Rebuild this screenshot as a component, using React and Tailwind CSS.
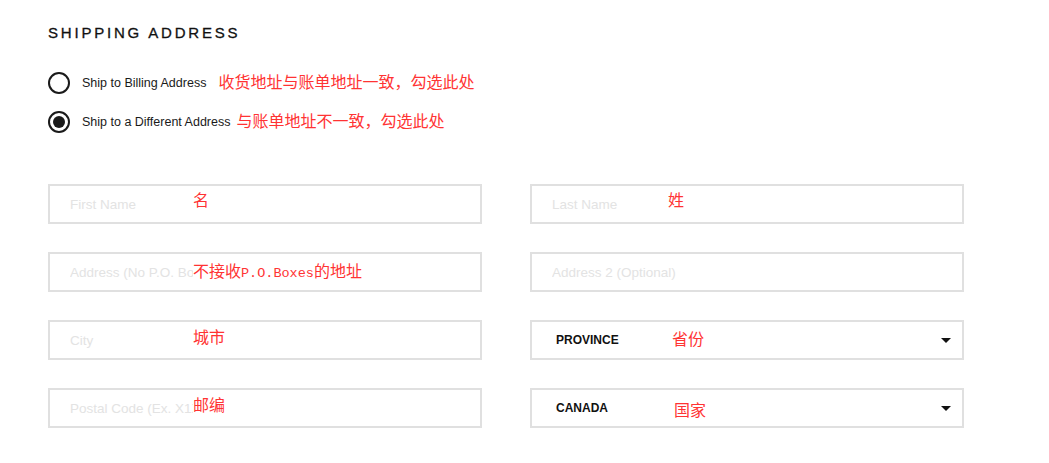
import { useState } from "react";

const red = "text-[#ff3333] font-['Noto_Sans_CJK_SC',sans-serif] text-[16px] leading-[20px]";

function Radio({ checked, label, note, noteGap, onClick }) {
  return (
    <button type="button" onClick={onClick} className="h-[22px] flex items-center text-left">
      <span className="w-[22px] h-[22px] rounded-full border-2 border-[#1a1a1a] flex items-center justify-center shrink-0">
        {checked && <span className="w-[12px] h-[12px] rounded-full bg-[#1a1a1a]" />}
      </span>
      <span className="ml-[12px] text-[12.5px] text-[#1a1a1a]">{label}</span>
      <span className={`text-[#ff3333] font-['Noto_Sans_CJK_SC',sans-serif] text-[16px] leading-[16px] mb-[4px] ${noteGap}`}>{note}</span>
    </button>
  );
}

function Field({ placeholder, note, noteLeft = "left-[145px]", noteTop }) {
  return (
    <div className="relative h-[40px]">
      <input
        placeholder={placeholder}
        className="w-full h-full border-2 border-[#e0e0e0] pl-[20px] text-[13.5px] outline-none placeholder:text-[#e3e3e3] font-['Liberation_Sans',Arial,sans-serif]"
      />
      {note && (
        <span className={`absolute bg-white pr-[10px] pb-[4px] ${red} ${noteLeft} ${noteTop}`}>{note}</span>
      )}
    </div>
  );
}

function Select({ value, note, noteLeft, noteTop }) {
  return (
    <div className="relative h-[40px] border-2 border-[#e0e0e0] flex items-center pl-[24px] pr-[11px] cursor-pointer">
      <span className="text-[12px] font-bold text-[#111] flex-1">{value}</span>
      <svg width="10" height="5" viewBox="0 0 10 5" className="shrink-0">
        <path d="M0 0h10L5 5z" fill="#111" />
      </svg>
      <span className={`absolute ${red} ${noteLeft} ${noteTop}`}>{note}</span>
    </div>
  );
}

export default function App() {
  const [ship, setShip] = useState("different");

  return (
    <div className="w-[1049px] h-[463px] bg-white pl-[48px] pt-[23px] font-['Liberation_Sans',Arial,sans-serif]">
      <h2 className="text-[15px] leading-[20px] tracking-[2.8px] text-[#111] [-webkit-text-stroke:0.3px_#111]">SHIPPING ADDRESS</h2>

      <div className="mt-[29px] flex flex-col gap-[17px]">
        <Radio
          checked={ship === "billing"}
          onClick={() => setShip("billing")}
          label="Ship to Billing Address"
          note="收货地址与账单地址一致，勾选此处"
          noteGap="ml-[12px]"
        />
        <Radio
          checked={ship === "different"}
          onClick={() => setShip("different")}
          label="Ship to a Different Address"
          note="与账单地址不一致，勾选此处"
          noteGap="ml-[6px]"
        />
      </div>

      <div className="mt-[51px] w-[916px] grid grid-cols-2 gap-x-[48px] gap-y-[28px]">
        <Field placeholder="First Name" note="名" noteTop="top-[5px]" />
        <Field placeholder="Last Name" note="姓" noteLeft="left-[138px]" noteTop="top-[5px]" />
        <Field
          placeholder="Address (No P.O. Boxes)"
          note={<>不接收<span className="font-['Liberation_Mono',monospace] text-[13.5px]">P.O.Boxes</span>的地址</>}
          noteTop="top-[8px]"
        />
        <Field placeholder="Address 2 (Optional)" />
        <Field placeholder="City" note="城市" noteTop="top-[6px]" />
        <Select value="PROVINCE" note="省份" noteLeft="left-[140px]" noteTop="top-[6px]" />
        <Field placeholder="Postal Code (Ex. X1X 1X1)" note="邮编" noteTop="top-[6px]" />
        <Select value="CANADA" note="国家" noteLeft="left-[142px]" noteTop="top-[9px]" />
      </div>
    </div>
  );
}
